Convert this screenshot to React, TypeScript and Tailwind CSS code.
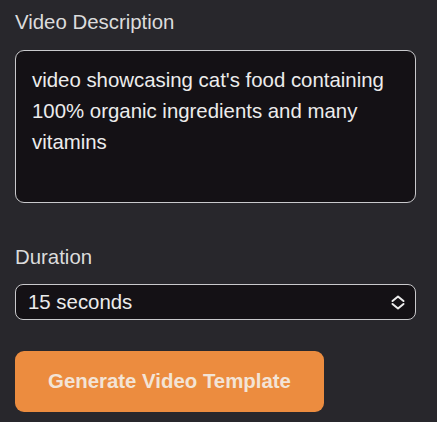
import React from "react";

export default function App() {
  return (
    <div
      className="w-[437px] h-[422px] bg-[#28272c] overflow-hidden px-[15px] pt-[8px]"
      style={{ fontFamily: '"Liberation Sans", Arial, sans-serif' }}
    >
      <div className="text-[20.4px] leading-[28px] text-[#dcdcdc]">Video Description</div>
      <div className="mt-[14px] h-[153px] w-[401px] rounded-[9px] border-[1.5px] border-[#c9c9cc] bg-[#141115] pl-[16px] pr-[12px] pt-[14px] text-[20.4px] leading-[31px] text-[#ececec]">
        video showcasing cat's food containing 100% organic ingredients and many vitamins
      </div>
      <div className="mt-[40px] text-[20.4px] leading-[28px] text-[#dcdcdc]">Duration</div>
      <div className="mt-[13px] flex h-[36px] w-[401px] items-center justify-between rounded-[8px] border-[1.5px] border-[#c9c9cc] bg-[#141115] pl-[12px] pr-[10px]">
        <span className="text-[20.4px] text-[#ececec]">15 seconds</span>
        <svg width="14" height="15" viewBox="0 0 14 15" fill="none" stroke="#ececec" strokeWidth="2" strokeLinecap="round" strokeLinejoin="round">
          <path d="M1.5 6 L7 1.5 L12.5 6" />
          <path d="M1.5 9 L7 13.5 L12.5 9" />
        </svg>
      </div>
      <button className="mt-[31px] flex h-[61px] w-[309px] items-center justify-center rounded-[9px] bg-[#ec8c3f] text-[20.4px] font-bold text-[#f3e4d6]">
        Generate Video Template
      </button>
    </div>
  );
}
